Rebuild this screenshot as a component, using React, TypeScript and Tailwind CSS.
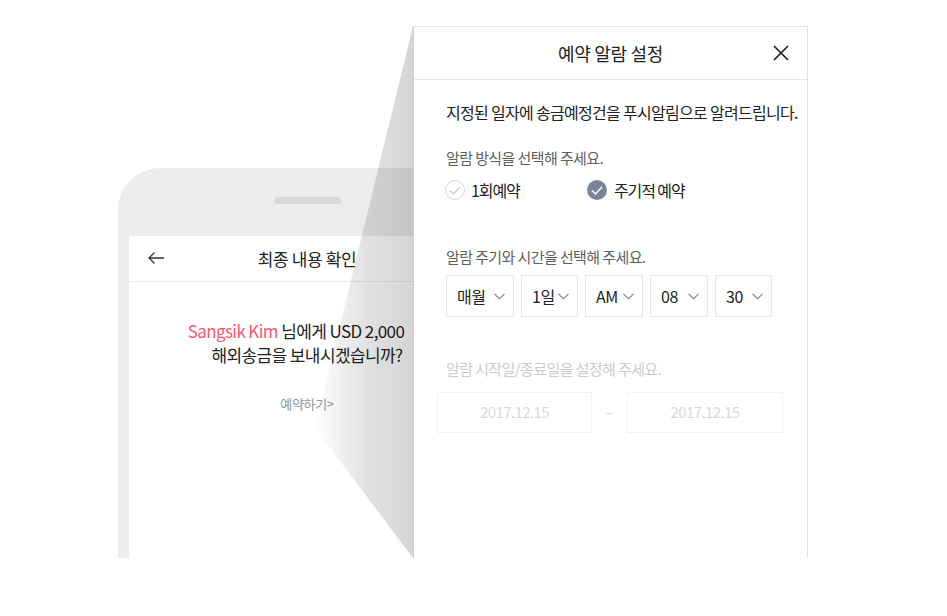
function BackArrow() {
  return (
    <svg width="16" height="12" viewBox="0 0 16 12" fill="none" stroke="#333" strokeWidth="1.3">
      <path d="M1 6h15M6.5 0.5L1 6l5.5 5.5" />
    </svg>
  );
}

function CloseIcon() {
  return (
    <svg width="16" height="16" viewBox="0 0 16 16" fill="none" stroke="#222" strokeWidth="1.7">
      <path d="M1 1l14 14M15 1L1 15" />
    </svg>
  );
}

function Chevron() {
  return (
    <svg width="11" height="7" viewBox="0 0 11 7" fill="none" stroke="#7a7a7a" strokeWidth="1.1">
      <path d="M0.5 0.8l5 5 5-5" />
    </svg>
  );
}

function CheckCircle({ checked }: { checked: boolean }) {
  return (
    <span
      className={
        checked
          ? "flex h-[20px] w-[20px] items-center justify-center rounded-full bg-[#7b8598]"
          : "flex h-[20px] w-[20px] items-center justify-center rounded-full border border-[#d6d6d6] bg-white"
      }
    >
      <svg width="12" height="9" viewBox="0 0 12 9" fill="none" stroke={checked ? "#fff" : "#cfcfcf"} strokeWidth="1.4">
        <path d="M1 4.5l3.5 3.5L11 1" />
      </svg>
    </span>
  );
}

const selects = [
  { label: "매월", w: "w-[68px]" },
  { label: "1일", w: "w-[57px]" },
  { label: "AM", w: "w-[58px]" },
  { label: "08", w: "w-[58px]" },
  { label: "30", w: "w-[57px]" },
];

export default function App() {
  return (
    <div className="relative h-[616px] w-[947px] overflow-hidden bg-white font-['Noto_Sans_CJK_KR','Noto_Sans',sans-serif] text-[#222]">
      {/* phone */}
      <div className="absolute left-[118px] top-[168px] flex h-[390px] w-[378px] flex-col items-center rounded-t-[42px] bg-[#ececec]">
        <div className="mt-[29px] h-[7px] w-[67px] rounded-full bg-[#d9d9d9]" />
        <div className="mt-[32px] flex w-[356px] flex-1 flex-col bg-white">
          <div className="relative flex h-[46px] items-center justify-center border-b border-[#ebebeb]">
            <span className="absolute left-[19px] top-[16px]">
              <BackArrow />
            </span>
            <span className="text-[17px] leading-[22px] tracking-[-0.4px] text-[#222]">최종 내용 확인</span>
          </div>
          <div className="pt-[37px] text-center text-[17px] leading-[24px] tracking-[-0.6px]">
            <p className="-ml-[22px] whitespace-nowrap">
              <span className="text-[#f45b6e]">Sangsik Kim</span> 님에게 USD 2,000
            </p>
            <p>해외송금을 보내시겠습니까?</p>
            <p className="mt-[27px] text-[13px] leading-[20px] tracking-[-0.3px] text-[#8b94a5]">예약하기&gt;</p>
          </div>
        </div>
      </div>

      {/* projection shadow */}
      <svg className="absolute left-0 top-0" width="947" height="616">
        <defs>
          <linearGradient id="proj" gradientUnits="userSpaceOnUse" x1="315" y1="0" x2="410" y2="0">
            <stop offset="0" stopColor="#000" stopOpacity="0" />
            <stop offset="0.55" stopColor="#000" stopOpacity="0.12" />
            <stop offset="1" stopColor="#000" stopOpacity="0.16" />
          </linearGradient>
        </defs>
        <polygon points="413,26 315,428 413,558" fill="url(#proj)" />
      </svg>

      {/* alarm panel */}
      <div className="absolute left-[413px] top-[26px] flex h-[532px] w-[395px] flex-col border-x border-t border-l-[#cfcfcf] border-r-[#e0e0e0] border-t-[#e6e6e6] bg-white">
        <div className="relative flex h-[53px] shrink-0 items-center justify-center border-b border-[#e8e8e8]">
          <span className="text-[18px] leading-[24px] tracking-[-0.3px] text-[#222]">예약 알람 설정</span>
          <span className="absolute right-[18px] top-[18px]">
            <CloseIcon />
          </span>
        </div>

        <div className="pl-[32px] pr-[4px]">
          <p className="mt-[21px] whitespace-nowrap text-[16px] leading-[22px] tracking-[-0.7px] text-[#222]">
            지정된 일자에 송금예정건을 푸시알림으로 알려드립니다.
          </p>

          <p className="mt-[25px] text-[15px] leading-[20px] tracking-[-0.6px] text-[#5f5f5f]">알람 방식을 선택해 주세요.</p>
          <div className="-ml-[1px] mt-[11px] flex h-[22px] items-center">
            <div className="flex w-[142px] items-center gap-[6px]">
              <CheckCircle checked={false} />
              <span className="text-[16px] leading-[22px] tracking-[-1.1px]">1회예약</span>
            </div>
            <div className="flex items-center gap-[7px]">
              <CheckCircle checked={true} />
              <span className="text-[16px] leading-[22px] tracking-[-1.1px]">주기적 예약</span>
            </div>
          </div>

          <p className="mt-[46px] text-[15px] leading-[20px] tracking-[-0.6px] text-[#5f5f5f]">
            알람 주기와 시간을 선택해 주세요.
          </p>
          <div className="mt-[8px] flex gap-[7px]">
            {selects.map((s) => (
              <div
                key={s.label}
                className={`${s.w} flex h-[42px] items-center justify-between border border-[#e6e6e6] pl-[10px] pr-[8px]`}
              >
                <span className="text-[16px] leading-[20px] tracking-[-0.5px]">{s.label}</span>
                <Chevron />
              </div>
            ))}
          </div>

          <p className="mt-[42px] text-[15px] leading-[20px] tracking-[-0.6px] text-[#cbcbcb]">
            알람 시작일/종료일을 설정해 주세요.
          </p>
          <div className="-ml-[9px] mt-[13px] flex items-center">
            <div className="flex h-[41px] w-[155px] items-center justify-center border border-[#f3f3f3] text-[15px] tracking-[-0.6px] text-[#d9d9d9]">
              2017.12.15
            </div>
            <div className="flex w-[35px] justify-center text-[15px] text-[#dedede]">–</div>
            <div className="flex h-[41px] w-[156px] items-center justify-center border border-[#f3f3f3] text-[15px] tracking-[-0.6px] text-[#d9d9d9]">
              2017.12.15
            </div>
          </div>
        </div>
      </div>
    </div>
  );
}
